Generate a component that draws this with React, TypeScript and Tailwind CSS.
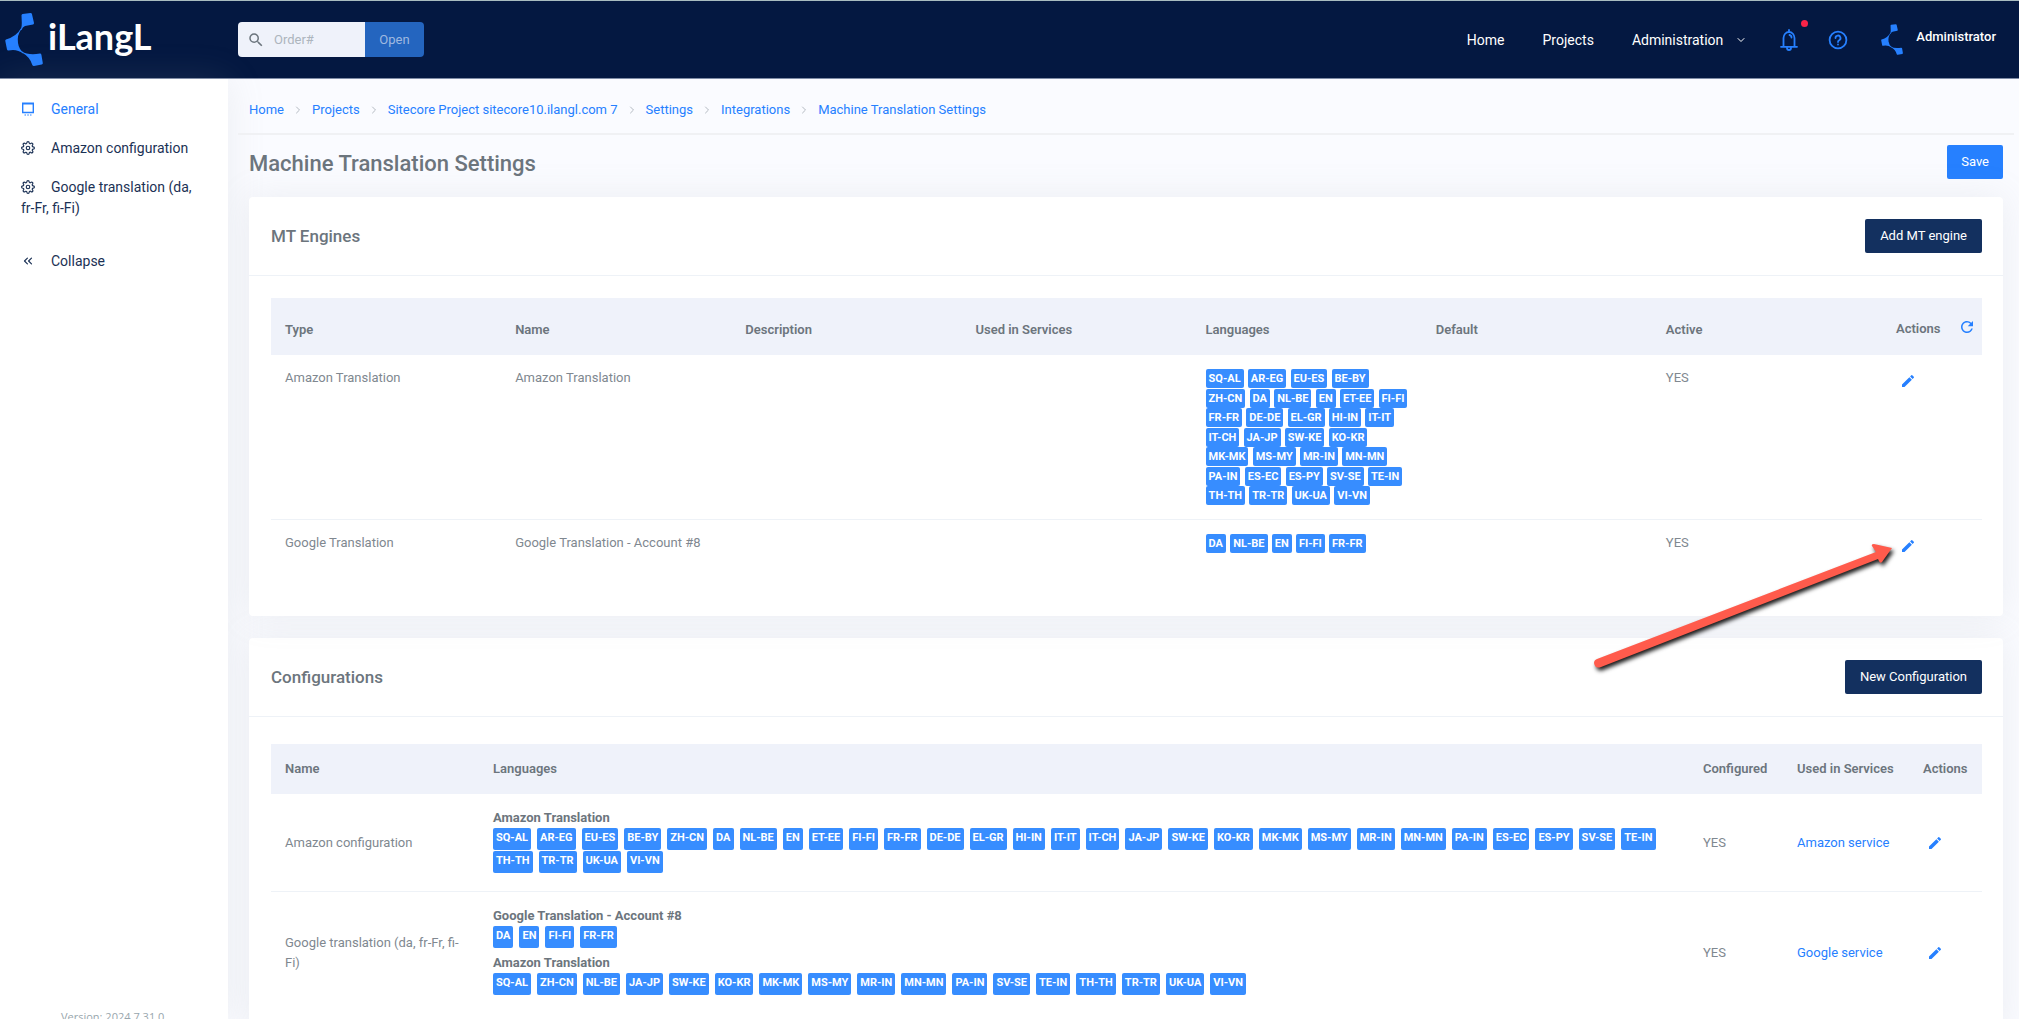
import React from "react";
import { ChevronDown, ChevronRight, ChevronsLeft } from "lucide-react";
import { FiSettings } from "react-icons/fi";
import { MdEdit, MdRefresh, MdSearch } from "react-icons/md";

const breadcrumbs = [
  "Home",
  "Projects",
  "Sitecore Project sitecore10.ilangl.com 7",
  "Settings",
  "Integrations",
  "Machine Translation Settings",
];

const amazonLanguages = [
  "SQ-AL", "AR-EG", "EU-ES", "BE-BY", "ZH-CN", "DA", "NL-BE", "EN", "ET-EE", "FI-FI", "FR-FR",
  "DE-DE", "EL-GR", "HI-IN", "IT-IT", "IT-CH", "JA-JP", "SW-KE", "KO-KR", "MK-MK", "MS-MY",
  "MR-IN", "MN-MN", "PA-IN", "ES-EC", "ES-PY", "SV-SE", "TE-IN", "TH-TH", "TR-TR", "UK-UA", "VI-VN",
];

const engineColumns = ["Type", "Name", "Description", "Used in Services", "Languages", "Default", "Active"];

const engines = [
  { type: "Amazon Translation", name: "Amazon Translation", languages: amazonLanguages },
  {
    type: "Google Translation",
    name: "Google Translation - Account #8",
    languages: ["DA", "NL-BE", "EN", "FI-FI", "FR-FR"],
  },
];

const configurations = [
  {
    name: "Amazon configuration",
    groups: [{ engine: "Amazon Translation", languages: amazonLanguages }],
    service: "Amazon service",
  },
  {
    name: "Google translation (da, fr-Fr, fi-Fi)",
    groups: [
      { engine: "Google Translation - Account #8", languages: ["DA", "EN", "FI-FI", "FR-FR"] },
      {
        engine: "Amazon Translation",
        languages: [
          "SQ-AL", "ZH-CN", "NL-BE", "JA-JP", "SW-KE", "KO-KR", "MK-MK", "MS-MY", "MR-IN",
          "MN-MN", "PA-IN", "SV-SE", "TE-IN", "TH-TH", "TR-TR", "UK-UA", "VI-VN",
        ],
      },
    ],
    service: "Google service",
  },
];

const LogoMark: React.FC<{ className: string }> = ({ className }) => (
  <svg viewBox="0 0 38 53" className={className} fill="#2680ff" aria-hidden="true">
    <path d="M16.5 2.2 Q16.6 1.2 17.6 1 L25.5 0 Q26.8 0 27 1.2 L29 10 Q29 11.3 28 11.5 L20 13 Q17.5 14 16.5 17 L15.8 16.8 Q17 13 16.8 10 Z" />
    <path d="M15.8 15.5 Q12 23 1 26.5 Q0 27 0.3 28 L2 36.5 Q2.4 37.6 3.5 37.4 Q12 35.5 18 40.5 L18.6 39.8 Q14 36.5 13 30 Q11.8 22 16.5 16 Z" />
    <path d="M17 38.5 Q23 42.5 35 40.6 Q36.2 40.6 36.4 41.8 L37.8 50 Q38 51.3 36.7 51.6 L29 53 Q27.6 53 27.2 51.8 Q25 44 17 39.5 Z" />
  </svg>
);

const BellIcon = () => (
  <svg viewBox="0 0 18 22" className="h-[22px] w-[18px]" fill="none" stroke="#2680ff" strokeWidth="1.8" strokeLinecap="round" strokeLinejoin="round">
    <path d="M9 1v2M3.500 17V9a5.500 6 0 0 1 11 0v8M1 17.800h16M7 19a2 2 0 0 0 4 0M9.500 6a2.500 2.500 0 0 1 2 2.500" />
  </svg>
);

const HelpIcon = () => (
  <svg viewBox="0 0 20 20" className="size-5" fill="none" stroke="#2680ff" strokeWidth="1.8" strokeLinecap="round">
    <circle cx="10" cy="10" r="8.4" />
    <path d="M7.500 8a2.500 2.500 0 1 1 3.700 2.200C10.300 10.700 10 11.200 10 12M10 14.400v.2" />
  </svg>
);

const GeneralIcon = () => (
  <svg viewBox="0 0 14 14" className="mr-4 inline-block size-[14px] align-[-2px]" fill="none" stroke="#2680ff" aria-hidden="true">
    <path d="M1.700 1v9.500h10.600V1" strokeWidth="1.4" />
    <path d="M1 1.500h12" strokeWidth="2" />
    <path d="M3.500 13H5M6.300 13h1.500M9 13h1.500" strokeWidth="1.2" />
  </svg>
);

const EditButton = () => (
  <button type="button" aria-label="Edit" className="block p-1 text-[#2680ff]">
    <MdEdit className="size-4" />
  </button>
);

const LanguageTags: React.FC<{ languages: string[] }> = ({ languages }) => (
  <div className="flex flex-wrap gap-x-[6px] gap-y-px">
    {languages.map((lang) => (
      <span
        key={lang}
        className="h-[22px] rounded-xs bg-[#378dff] px-[3px] text-[11px] font-bold leading-5 text-white"
      >
        {lang}
      </span>
    ))}
  </div>
);

const CardHeader: React.FC<{ title: string; action: string }> = ({ title, action }) => (
  <div className="flex items-center justify-between border-b border-[#eef2f7] py-[22px] pl-[22px] pr-[21px]">
    <h2 className="text-[17px] font-medium leading-6 text-[#6c757d]">{title}</h2>
    <button type="button" className="h-[34px] rounded-xs bg-[#13305f] px-[15px] text-white">
      {action}
    </button>
  </div>
);

const Header = () => (
  <header className="flex h-[79px] shrink-0 items-center border-b border-t border-b-[#7f8ca6] border-t-[#a9bcc0] bg-[#041841] text-white">
    <a href="#" className="flex w-[238px] items-center gap-[5px] pl-[5px]">
      <LogoMark className="h-[53px] w-[38px]" />
      <span className="pb-2 font-['Lato',sans-serif] text-4xl font-bold leading-10">iLangL</span>
    </a>
    <form className="flex h-[35px] overflow-hidden rounded-sm">
      <label className="flex w-[127px] items-center bg-[#eff2fa] pl-[9px]">
        <MdSearch className="size-[18px] shrink-0 text-[#6c757d]" />
        <input
          type="text"
          aria-label="Order number"
          placeholder="Order#"
          className="ml-[9px] w-full min-w-0 text-gray-700 outline-none placeholder:text-[#adb5bd]"
        />
      </label>
      <button type="button" className="w-[59px] bg-[#2465bf] text-[#9fb9e0]">
        Open
      </button>
    </form>
    <nav className="ml-auto flex items-center pr-[23px] text-sm">
      <a href="#" className="mr-[38px]">Home</a>
      <a href="#" className="mr-[38px]">Projects</a>
      <button type="button" className="mr-[33px] flex items-center gap-3">
        Administration
        <ChevronDown className="size-3" />
      </button>
      <button type="button" aria-label="Notifications" className="relative mr-[30px]">
        <BellIcon />
        <span className="absolute -right-[10px] -top-[9px] size-[7px] rounded-full bg-[#fa2448]" />
      </button>
      <button type="button" aria-label="Help" className="mr-[33px]">
        <HelpIcon />
      </button>
      <a href="#" className="flex items-center gap-[13px] text-[13px] font-medium">
        <LogoMark className="h-[31px] w-[22px]" />
        <span className="pb-1">Administrator</span>
      </a>
    </nav>
  </header>
);

const Sidebar = () => (
  <aside className="w-[228px] shrink-0 bg-white text-sm leading-[21px] text-[#1b3155] shadow-[0_0_35px_0_rgba(154,161,171,0.15)]">
    <div className="flex h-[calc(100%+6px)] flex-col">
      <nav className="px-[21px] pt-5">
        <a href="#" className="block pb-[18px] text-[#2680ff]">
          <GeneralIcon />
          General
        </a>
        <a href="#" className="block pb-[18px]">
          <FiSettings className="mr-4 inline-block size-[14px] align-[-2px]" />
          Amazon configuration
        </a>
        <a href="#" className="block pb-8">
          <FiSettings className="mr-4 inline-block size-[14px] align-[-2px]" />
          Google translation (da, fr-Fr, fi-Fi)
        </a>
        <button type="button" className="block">
          <ChevronsLeft className="mr-4 inline-block size-[14px] align-[-2px]" />
          Collapse
        </button>
      </nav>
      <p className="mt-auto pl-[61px] font-['Open_Sans',sans-serif] text-[11px] leading-4 text-[#98a6ad]">
        Version: 2024.7.31.0
      </p>
    </div>
  </aside>
);

const EnginesTable = () => (
  <table className="w-full table-fixed text-left">
    <thead className="bg-[#eff2fa] text-[#6c757d]">
      <tr>
        {engineColumns.map((col) => (
          <th key={col} className="h-[57px] px-[14px] pt-[7px] font-semibold">{col}</th>
        ))}
        <th className="w-[100px] pl-[14px] pr-[6px] pt-1 font-semibold">
          <div className="flex items-center justify-between">
            Actions
            <button type="button" aria-label="Refresh" className="pb-1 text-[#2680ff]">
              <MdRefresh className="size-[18px]" />
            </button>
          </div>
        </th>
      </tr>
    </thead>
    <tbody>
      {engines.map((engine) => (
        <tr key={engine.type} className="border-b border-[#eef2f7] align-top last:border-b-0">
          <td className="px-[14px] pt-[13px]">{engine.type}</td>
          <td className="px-[14px] pt-[13px]">{engine.name}</td>
          <td />
          <td />
          <td className="pb-[14px] pl-[14px] pr-3 pt-[13px]">
            {engine.languages.map((lang) => (
              <React.Fragment key={lang}>
                <span className="mr-px whitespace-nowrap rounded-xs bg-[#378dff] px-[3px] py-[3px] text-[11px] font-bold text-white">
                  {lang}
                </span>{" "}
              </React.Fragment>
            ))}
          </td>
          <td />
          <td className="px-[14px] pt-[13px]">YES</td>
          <td className="px-[14px] pt-[14px]"><EditButton /></td>
        </tr>
      ))}
    </tbody>
  </table>
);

const ConfigurationsTable = () => (
  <table className="w-full table-fixed text-left">
    <thead className="bg-[#eff2fa] text-[#6c757d]">
      <tr>
        <th className="h-[50px] w-[208px] px-[14px] font-semibold">Name</th>
        <th className="px-[14px] font-semibold">Languages</th>
        <th className="w-[94px] px-[14px] font-semibold">Configured</th>
        <th className="w-[126px] px-[14px] font-semibold">Used in Services</th>
        <th className="w-[73px] px-[14px] font-semibold">Actions</th>
      </tr>
    </thead>
    <tbody>
      {configurations.map((config) => (
        <tr key={config.name} className="border-b border-[#eef2f7] last:border-b-0">
          <td className="px-[14px]">{config.name}</td>
          <td className="px-[14px] pb-[13px] pt-[14px]">
            {config.groups.map((group) => (
              <div key={group.engine} className="pb-[5px]">
                <p className="font-bold leading-5 text-[#6c757d]">{group.engine}</p>
                <LanguageTags languages={group.languages} />
              </div>
            ))}
          </td>
          <td className="px-[14px]">YES</td>
          <td className="px-[14px]">
            <a href="#" className="text-[#2680ff]">{config.service}</a>
          </td>
          <td className="px-[14px]"><EditButton /></td>
        </tr>
      ))}
    </tbody>
  </table>
);

// Red pointer over the Google engine's edit button
const Arrow = () => (
  <svg
    viewBox="0 0 310 130"
    className="pointer-events-none absolute right-[116px] top-[463px] h-[130px] w-[310px] drop-shadow-[2px_3px_2px_rgba(0,0,0,0.9)]"
    aria-hidden="true"
  >
    <path d="M4 117 L283 10 L279 4 Q278 2 281 2 L299 6 L289 20 Q287 22 286 19 L285 17 L8 125 Q2 127 1 121 Q1 118 4 117 Z" fill="#ff5b4c" />
  </svg>
);

const App: React.FC = () => {
  return (
    <div className="flex h-screen flex-col overflow-hidden bg-[#fafbff] font-['Roboto',sans-serif] text-[13px] leading-normal text-[#808890]">
      <Header />
      <div className="flex min-h-0 flex-1">
        <Sidebar />
        <main className="relative min-w-0 flex-1 overflow-y-auto overflow-x-hidden pl-[10px] pr-[5px] [scrollbar-width:none]">
          {/* Breadcrumbs */}
          <ol className="flex h-[56px] items-center border-b-2 border-[#f0f1f4] pl-[11px] pt-[7px]">
            {breadcrumbs.map((crumb, i) => (
              <li key={crumb} className="flex items-center">
                {i > 0 && <ChevronRight className="mx-2 size-3 text-[#b4bac2]" />}
                <a href="#" className="text-[#2680ff]">{crumb}</a>
              </li>
            ))}
          </ol>

          <div className="flex items-center justify-between px-[11px] pb-[18px] pt-[10px]">
            <h1 className="pt-1 text-[22px] font-medium leading-[30px] text-[#6c757d]">Machine Translation Settings</h1>
            <button type="button" className="h-[34px] rounded-xs bg-[#2680ff] px-[14px] text-white">
              Save
            </button>
          </div>

          <div className="space-y-[22px] px-[11px] pb-6">
            <section className="relative rounded-sm bg-white shadow-[0_0_35px_0_rgba(154,161,171,0.15)]">
              <CardHeader title="MT Engines" action="Add MT engine" />
              <div className="pb-[50px] pl-[22px] pr-[21px] pt-[22px]">
                <EnginesTable />
              </div>
            </section>

            <section className="rounded-sm bg-white shadow-[0_0_35px_0_rgba(154,161,171,0.15)]">
              <CardHeader title="Configurations" action="New Configuration" />
              <div className="pb-[21px] pl-[22px] pr-[21px] pt-[27px]">
                <ConfigurationsTable />
              </div>
            </section>
          </div>
          <Arrow />
        </main>
      </div>
    </div>
  );
};

export default App;
